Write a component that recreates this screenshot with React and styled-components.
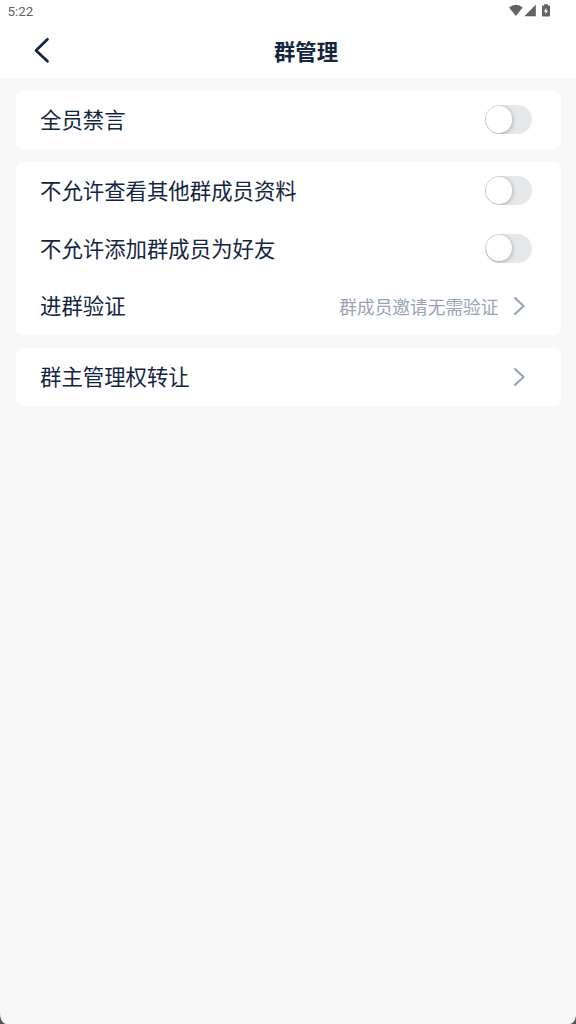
import React, { useState } from 'react';
import styled, { createGlobalStyle } from 'styled-components';

const GlobalStyle = createGlobalStyle`
  * {
    box-sizing: border-box;
  }

  body {
    margin: 0;
    background-color: #555;
  }
`;

const Screen = styled.div`
  display: flex;
  flex-direction: column;
  width: 100%;
  height: 100vh;
  overflow: hidden;
  background-color: #f8f8f8;
  border-radius: 0 0 6px 6px / 0 0 10px 11px;
  font-family: 'Noto Sans CJK SC', 'Noto Sans', sans-serif;
  color: #14253f;
`;

const StatusBar = styled.div`
  display: flex;
  align-items: center;
  justify-content: space-between;
  height: 24px;
  padding: 0 25px 0 7.5px;
  background-color: #fff;
  color: #636363;
`;

const Clock = styled.span`
  font-family: Roboto, sans-serif;
  font-size: 13.3px;
  line-height: 24px;
`;

const StatusIcons = styled.svg`
  display: block;
  width: 42px;
  height: 24px;
`;

// Três colunas: o título fica entre o botão de voltar e um espaço vazio
const Header = styled.header`
  display: grid;
  grid-template-columns: 64px 1fr 60px;
  align-items: center;
  height: 54px;
  padding-left: 32px;
  background-color: #fff;
`;

const BackButton = styled.button`
  display: flex;
  height: 54px;
  padding: 0;
  border: 0;
  background: none;
  color: inherit;
  cursor: pointer;
`;

const BackIcon = styled.svg`
  width: 48px;
  height: 54px;
`;

const Title = styled.h1`
  margin: 0;
  text-align: center;
  font-size: 21.3px;
  font-weight: 700;
  line-height: 54px;
`;

const Content = styled.main`
  display: flex;
  flex-direction: column;
  gap: 13px;
  padding: 13.4px 15.5px;
`;

const Card = styled.section`
  background-color: #fff;
  border-radius: 7px;
`;

const Row = styled.div`
  display: flex;
  align-items: center;
  justify-content: space-between;
  height: 57.7px;
  padding: 0 28.5px 0 24.5px;
`;

const Label = styled.span`
  padding-bottom: 2px;
  font-size: 21.4px;
  line-height: 32px;
`;

const Detail = styled.div`
  display: flex;
  align-items: center;
  gap: 14px;
  padding-right: 6.5px;
`;

const Value = styled.span`
  color: #98a3b8;
  font-size: 17.7px;
  line-height: 26px;
`;

const ArrowIcon = styled.svg`
  display: block;
  width: 13px;
  height: 20px;
`;

const Track = styled.button`
  display: flex;
  align-items: center;
  justify-content: ${({ $on }) => ($on ? 'flex-end' : 'flex-start')};
  width: 47.5px;
  height: 29px;
  margin-bottom: 1px;
  padding: 0 1px;
  border: 0;
  border-radius: 15px;
  background-color: ${({ $on }) => ($on ? '#3b7cff' : '#e7e8ea')};
  overflow: hidden;
  cursor: pointer;
`;

const Knob = styled.span`
  width: 26.6px;
  height: 26.6px;
  border-radius: 50%;
  background-color: #fff;
  box-shadow: 0 1px 5px rgba(0, 0, 0, 0.32);
`;

const Switch = ({ label }) => {
  const [on, setOn] = useState(false);

  return (
    <Track role="switch" aria-label={label} aria-checked={on} $on={on} onClick={() => setOn(!on)}>
      <Knob />
    </Track>
  );
};

const Arrow = () => (
  <ArrowIcon viewBox="0 0 13 20" fill="none" stroke="#98a3b8" strokeWidth="2.1">
    <path d="M2 2 L10.6 10 L2 18" strokeLinecap="round" strokeLinejoin="round" />
  </ArrowIcon>
);

const groups = [
  [{ label: '全员禁言', type: 'switch' }],
  [
    { label: '不允许查看其他群成员资料', type: 'switch' },
    { label: '不允许添加群成员为好友', type: 'switch' },
    { label: '进群验证', value: '群成员邀请无需验证' }
  ],
  [{ label: '群主管理权转让' }]
];

const App = () => {
  return (
    <Screen>
      <GlobalStyle />
      <StatusBar>
        <Clock>5:22</Clock>
        <StatusIcons viewBox="0 0 42 24" fill="currentColor">
          {/* wifi, sinal e bateria */}
          <path d="M0 7.4 Q6.9 2.2 13.8 7.4 L6.9 16.1 Z" />
          <path d="M15.3 16.2 L26.8 4.8 V16.2 Z" />
          <path d="M35.1 5.4 V4.3 H38.8 V5.4 H40.1 Q41 5.4 41 6.3 V15.5 Q41 16.5 40.1 16.5 H33.9 Q33 16.5 33 15.5 V6.3 Q33 5.4 33.9 5.4 Z" />
          <path d="M37.3 7.7 L34.9 11.5 H36.5 V14.2 L39 10.4 H37.3 Z" fill="#fff" />
        </StatusIcons>
      </StatusBar>
      <Header>
        <BackButton aria-label="返回">
          <BackIcon viewBox="0 0 48 54" fill="none" stroke="currentColor" strokeWidth="2.7">
            <path d="M15.5 15.3 L4 26.5 L15.5 37.3" strokeLinecap="round" strokeLinejoin="round" />
          </BackIcon>
        </BackButton>
        <Title>群管理</Title>
      </Header>
      <Content>
        {groups.map((rows, index) => (
          <Card key={index}>
            {rows.map((row) => (
              <Row key={row.label}>
                <Label>{row.label}</Label>
                {row.type === 'switch' ? (
                  <Switch label={row.label} />
                ) : (
                  <Detail>
                    {row.value && <Value>{row.value}</Value>}
                    <Arrow />
                  </Detail>
                )}
              </Row>
            ))}
          </Card>
        ))}
      </Content>
    </Screen>
  );
};

export default App;
